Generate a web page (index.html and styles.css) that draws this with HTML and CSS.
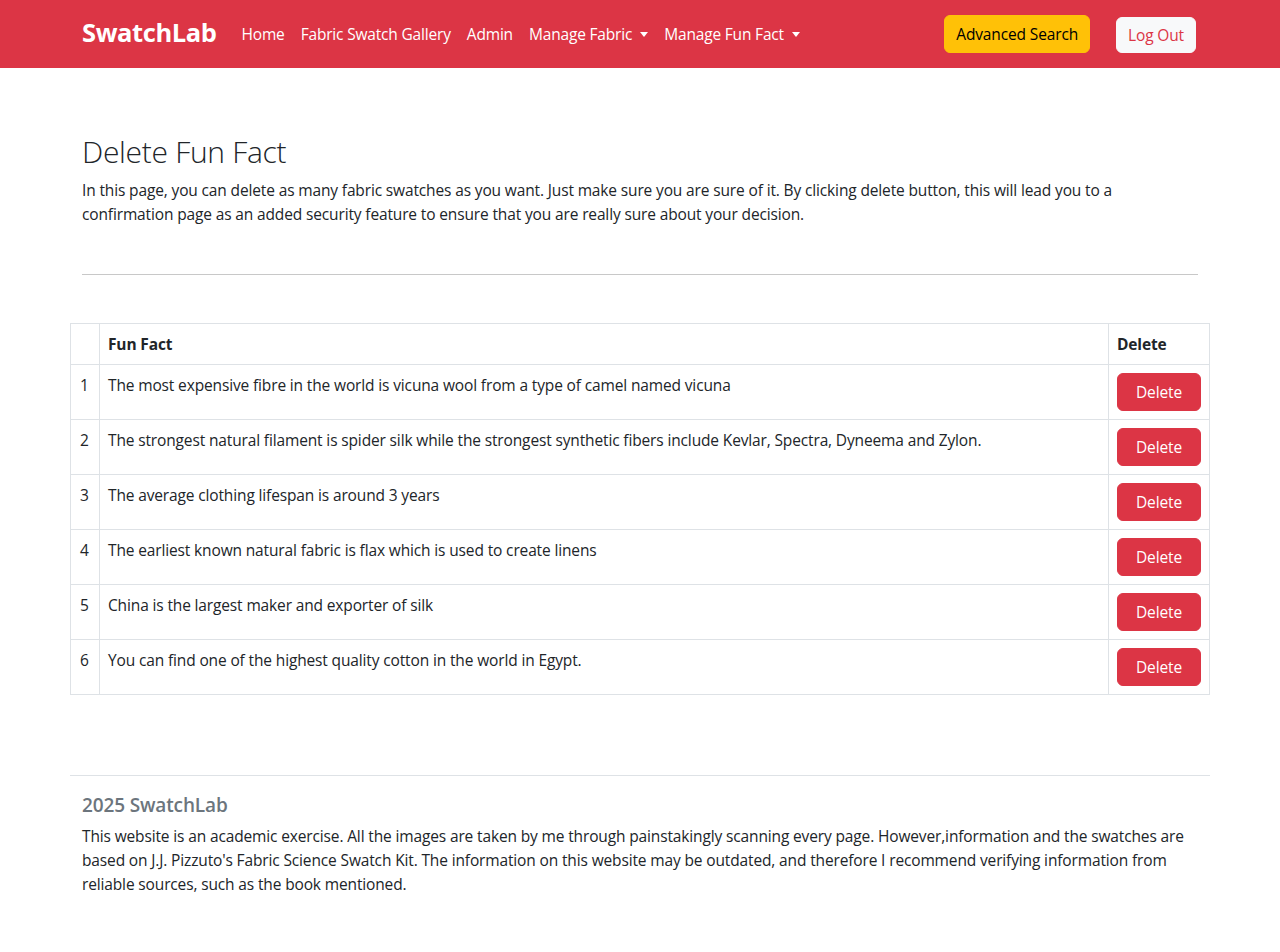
FILE: index.html
```html
<!DOCTYPE html>
<html lang="en">
<head>
<meta charset="utf-8">
<title>SwatchLab - Delete Fun Fact</title>
<link rel="stylesheet" href="styles.css">
</head>
<body>
<nav class="navbar">
  <div class="nav-inner">
    <a class="brand" href="#">SwatchLab</a>
    <ul class="nav-links">
      <li><a href="#">Home</a></li>
      <li><a href="#">Fabric Swatch Gallery</a></li>
      <li><a href="#">Admin</a></li>
      <li><a href="#" class="dropdown">Manage Fabric</a></li>
      <li><a href="#" class="dropdown">Manage Fun Fact</a></li>
    </ul>
    <div class="nav-actions">
      <a href="#" class="btn btn-warning">Advanced Search</a>
      <a href="#" class="btn btn-light">Log Out</a>
    </div>
  </div>
</nav>

<main class="container">
  <section class="intro">
    <h1 class="title">Delete Fun Fact</h1>
    <p class="lead-text">In this page, you can delete as many fabric swatches as you want. Just make sure you are sure of it. By clicking delete button, this will lead you to a confirmation page as an added security feature to ensure that you are really sure about your decision.</p>
    <hr class="divider">
  </section>

  <table class="facts">
    <colgroup>
      <col class="c-num">
      <col class="c-fact">
      <col class="c-del">
    </colgroup>
    <thead>
      <tr><th></th><th>Fun Fact</th><th>Delete</th></tr>
    </thead>
    <tbody>
      <tr><td>1</td><td>The most expensive fibre in the world is vicuna wool from a type of camel named vicuna</td><td><a href="#" class="btn btn-danger">Delete</a></td></tr>
      <tr><td>2</td><td>The strongest natural filament is spider silk while the strongest synthetic fibers include Kevlar, Spectra, Dyneema and Zylon.</td><td><a href="#" class="btn btn-danger">Delete</a></td></tr>
      <tr><td>3</td><td>The average clothing lifespan is around 3 years</td><td><a href="#" class="btn btn-danger">Delete</a></td></tr>
      <tr><td>4</td><td>The earliest known natural fabric is flax which is used to create linens</td><td><a href="#" class="btn btn-danger">Delete</a></td></tr>
      <tr><td>5</td><td>China is the largest maker and exporter of silk</td><td><a href="#" class="btn btn-danger">Delete</a></td></tr>
      <tr><td>6</td><td>You can find one of the highest quality cotton in the world in Egypt.</td><td><a href="#" class="btn btn-danger">Delete</a></td></tr>
    </tbody>
  </table>

  <footer class="footer">
    <hr class="footer-rule">
    <div class="footer-body">
      <h5 class="footer-title">2025 SwatchLab</h5>
      <p class="footer-text">This website is an academic exercise. All the images are taken by me through painstakingly scanning every page. However,information and the swatches are based on J.J. Pizzuto's Fabric Science Swatch Kit. The information on this website may be outdated, and therefore I recommend verifying information from reliable sources, such as the book mentioned.</p>
    </div>
  </footer>
</main>
</body>
</html>
```
FILE: styles.css
```css
* { box-sizing: border-box; }

body {
  margin: 0;
  font-family: "Open Sans", "Noto Sans", sans-serif;
  font-size: 15.5px;
  letter-spacing: -0.14px;
  line-height: 24px;
  color: #212529;
  background: #fff;
}

a { text-decoration: none; }

/* Navbar */
.navbar {
  background: #dc3545;
  height: 68px;
}
.nav-inner {
  width: 1140px;
  margin: 0 auto;
  padding: 0 14px 0 12px;
  height: 100%;
  display: flex;
  align-items: center;
}
.brand {
  color: #fff;
  font-size: 25.5px;
  font-weight: 700;
  letter-spacing: -0.4px;
  line-height: 36px;
  margin-right: 17px;
  padding-bottom: 4px;
}
.nav-links {
  list-style: none;
  margin: 0;
  padding: 0;
  display: flex;
  flex: 1;
  letter-spacing: -0.18px;
}
.nav-links a {
  display: block;
  color: #fff;
  padding: 8px 8px;
}
.dropdown::after {
  content: "";
  display: inline-block;
  vertical-align: 3px;
  margin-left: 8px;
  border-top: 5px solid #fff;
  border-left: 4.5px solid transparent;
  border-right: 4.5px solid transparent;
}
.nav-actions {
  display: flex;
  align-items: center;
  gap: 26px;
}

/* Buttons */
.btn {
  display: inline-block;
  border: 1px solid transparent;
  border-radius: 6px;
  padding: 6px 12px;
  line-height: 24px;
  text-align: center;
}
.btn-warning {
  background: #ffc107;
  border-color: #ffc107;
  color: #000;
  padding: 6px 11px;
}
.btn-light {
  background: #f8f9fa;
  border-color: #f8f9fa;
  color: #dc3545;
  padding: 5px 11px;
  margin-top: 1px;
}
.btn-danger {
  background: #dc3545;
  border-color: #dc3545;
  color: #fff;
  width: 84px;
  padding-left: 0;
  padding-right: 0;
}

/* Main */
.container {
  width: 1140px;
  margin: 0 auto;
}
.intro {
  padding: 65px 12px 0;
}
.title {
  margin: 0 0 7px;
  font-size: 30px;
  font-weight: 300;
  line-height: 38px;
  letter-spacing: -0.3px;
}
.lead-text {
  margin: 0;
}
.divider {
  margin: 48px 0 48px;
  border: 0;
  border-top: 1px solid #c8c8c8;
}

/* Table */
.facts {
  width: 100%;
  border-collapse: collapse;
  table-layout: fixed;
}
.c-num { width: 29px; }
.c-del { width: 101px; }
.facts th,
.facts td {
  border: 1px solid #dee2e6;
  padding: 8px;
  text-align: left;
  vertical-align: top;
}
.facts th {
  font-weight: 700;
}
.facts td:first-child {
  padding-left: 9px;
}

/* Footer */
.footer {
  margin-top: 80px;
}
.footer-rule {
  margin: 0;
  border: 0;
  border-top: 1px solid #dee2e6;
}
.footer-body {
  padding: 17px 12px 40px;
}
.footer-title {
  margin: 0 0 7px;
  font-size: 19px;
  font-weight: 600;
  line-height: 24px;
  color: #6c757d;
}
.footer-text {
  margin: 0;
}
```
